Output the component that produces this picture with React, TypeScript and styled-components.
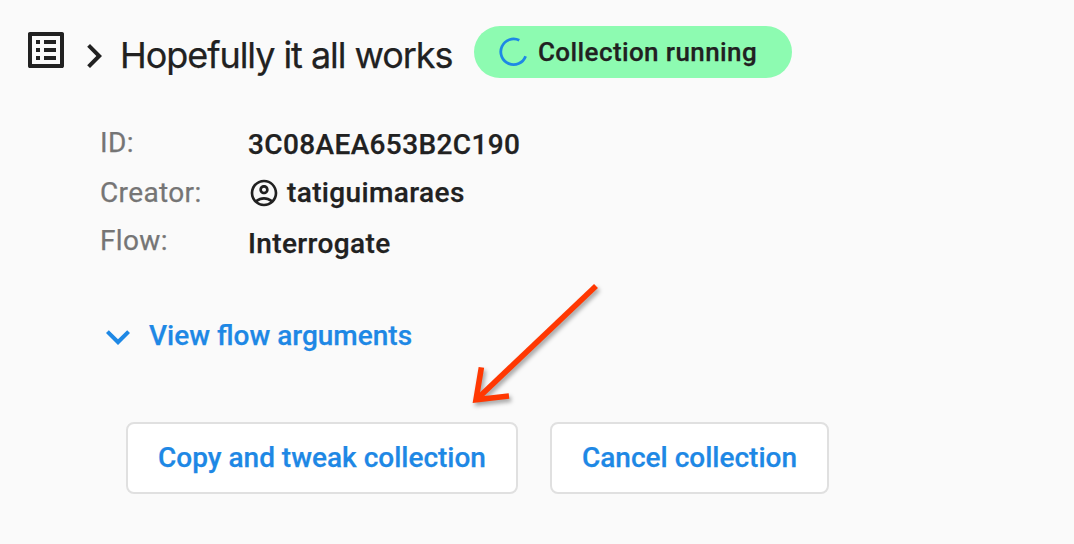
import React from "react";
import styled, { createGlobalStyle } from "styled-components";

const GlobalStyle = createGlobalStyle`
  * { box-sizing: border-box; }
  body { margin: 0; background: #fafafa; }
`;

const Page = styled.main`
  position: relative;
  width: 1074px;
  height: 544px;
  overflow: hidden;
  background: #fafafa;
  color: #212121;
  font: 500 28px/32px Roboto, sans-serif;
  -webkit-text-stroke: 0.25px currentColor;
`;

const Header = styled.header`
  display: flex;
  align-items: flex-start;
  height: 124px;
  padding: 26px 0 0 22px;
`;

const Icon = styled.svg<{ $size: number }>`
  display: block;
  flex: none;
  width: ${(p) => p.$size}px;
  height: ${(p) => p.$size}px;
  fill: currentColor;
`;

const Crumb = styled.div`
  margin-top: 6px;
`;

const Title = styled.h1`
  width: 354px;
  margin: 7px 0 0 2px;
  font: 400 36px/44px Inter, sans-serif;
  letter-spacing: -1.05px;
  white-space: nowrap;
`;

const Status = styled.div`
  display: flex;
  align-items: center;
  width: 318px;
  height: 52px;
  padding-left: 24px;
  border-radius: 26px;
  background: #8dfbb1;
  white-space: nowrap;
`;

const StatusText = styled.span`
  margin-left: 8px;
  font-size: 26px;
  letter-spacing: 0.4px;
`;

const Details = styled.dl`
  display: grid;
  grid-template-columns: 148px auto;
  grid-template-rows: 50px 48px 48px;
  height: 189px;
  margin: 0;
  padding: 3px 0 0 100px;
  letter-spacing: 0.37px;
`;

const Term = styled.dt`
  color: #757575;
  font-weight: 400;
`;

const Value = styled.dd<{ $drop: number }>`
  display: flex;
  align-items: center;
  height: 32px;
  margin: ${(p) => p.$drop}px 0 0;
`;

const User = styled.span`
  margin-left: 7px;
`;

const Toggle = styled.button`
  display: flex;
  align-items: center;
  height: 48px;
  margin: 0 0 0 94px;
  padding: 0;
  border: 0;
  background: none;
  color: #1e88e5;
  font: inherit;
`;

const ToggleText = styled.span`
  margin: -3px 0 0 7px;
`;

const Actions = styled.div`
  display: flex;
  gap: 32px;
  padding: 61px 0 0 126px;
`;

const ActionButton = styled.button<{ $width: number }>`
  width: ${(p) => p.$width}px;
  height: 72px;
  padding: 0;
  border: 2px solid #e0e0e0;
  border-radius: 8px;
  background: #fff;
  color: #1e88e5;
  font: inherit;
  white-space: nowrap;
`;

const Arrow = styled.svg`
  position: absolute;
  left: 460px;
  top: 276px;
  filter: drop-shadow(2px 3px 2px rgba(0, 0, 0, 0.35));
`;

export default function App() {
  return (
    <Page>
      <GlobalStyle />
      <Header>
        <Icon $size={48} viewBox="0 0 24 24">
          <path d="M11 7h6v2h-6zm0 4h6v2h-6zm0 4h6v2h-6zM7 7h2v2H7zm0 4h2v2H7zm0 4h2v2H7zM20.1 3H3.9c-.5 0-.9.4-.9.9v16.2c0 .4.4.9.9.9h16.2c.4 0 .9-.5.9-.9V3.9c0-.5-.5-.9-.9-.9zM19 19H5V5h14v14z" />
        </Icon>
        <Crumb>
          <Icon $size={48} viewBox="0 0 24 24">
            <path d="M10 6L8.59 7.41 13.17 12l-4.58 4.59L10 18l6-6z" />
          </Icon>
        </Crumb>
        <Title>Hopefully it all works</Title>
        <Status>
          <Icon $size={32} viewBox="0 0 32 32">
            <path
              d="M21.3 4.3A12.8 12.8 0 1 0 27.6 20.2"
              fill="none"
              stroke="#1e88e5"
              strokeWidth="2.8"
            />
          </Icon>
          <StatusText>Collection running</StatusText>
        </Status>
      </Header>
      <Details>
        <Term>ID:</Term>
        <Value $drop={2}>3C08AEA653B2C190</Value>
        <Term>Creator:</Term>
        <Value $drop={0}>
          <Icon $size={32} viewBox="0 0 24 24">
            <path d="M12 2C6.48 2 2 6.48 2 12s4.48 10 10 10 10-4.48 10-10S17.52 2 12 2zM7.35 18.5C8.66 17.56 10.26 17 12 17s3.34.56 4.65 1.5C15.34 19.44 13.74 20 12 20s-3.34-.56-4.65-1.5zm10.79-1.38C16.45 15.8 14.32 15 12 15s-4.45.8-6.14 2.12C4.7 15.73 4 13.95 4 12c0-4.42 3.58-8 8-8s8 3.58 8 8c0 1.95-.7 3.73-1.86 5.12z" />
            <path d="M12 6c-1.93 0-3.5 1.57-3.5 3.5S10.07 13 12 13s3.5-1.57 3.5-3.5S13.93 6 12 6zm0 5c-.83 0-1.5-.67-1.5-1.5S11.17 8 12 8s1.5.67 1.5 1.5S12.83 11 12 11z" />
          </Icon>
          <User>tatiguimaraes</User>
        </Value>
        <Term>Flow:</Term>
        <Value $drop={3}>Interrogate</Value>
      </Details>
      <Toggle>
        <Icon $size={48} viewBox="0 0 24 24">
          <path d="M16.59 8.59L12 13.17 7.41 8.59 6 10l6 6 6-6z" />
        </Icon>
        <ToggleText>View flow arguments</ToggleText>
      </Toggle>
      <Actions>
        <ActionButton $width={392}>Copy and tweak collection</ActionButton>
        <ActionButton $width={279}>Cancel collection</ActionButton>
      </Actions>
      <Arrow width="150" height="140" fill="none" stroke="#ff3802" strokeWidth="5.6">
        <path d="M136 10L16 124" />
        <path d="M21.4 91.4L16 123.8L49 120" />
      </Arrow>
    </Page>
  );
}
